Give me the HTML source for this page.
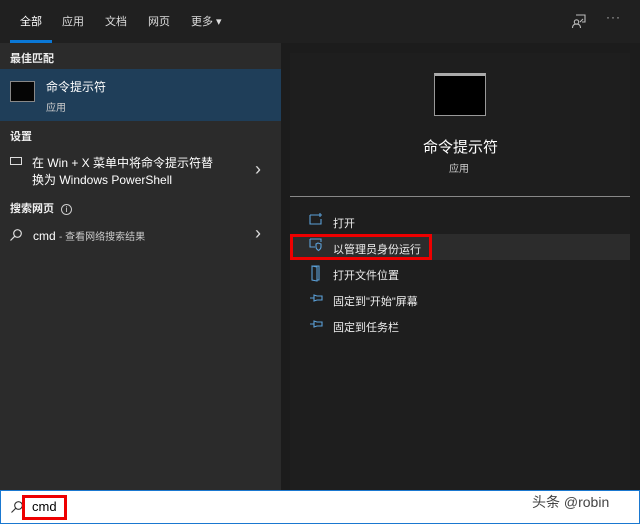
<!DOCTYPE html><html><head><meta charset="utf-8"><style>
*{margin:0;padding:0;box-sizing:border-box}
body{width:640px;height:524px;background:#1c1c1c;font-family:"Liberation Sans","Noto Sans CJK SC",sans-serif;color:#fff;position:relative;overflow:hidden}
.a{position:absolute}
.top{left:0;top:0;width:640px;height:43px;background:#202020}
.tab{top:13px;font-size:11px;color:#ddd}
.left{left:0;top:43px;width:281px;height:447px;background:#2b2b2b}
.card{left:290px;top:53px;width:340px;height:437px;background:#1e1e1e}
.h{font-size:11px;font-weight:bold;color:#eee}
.t{font-size:12px;color:#fff}
.s{font-size:10px;color:#ccc}
.m{font-size:11px;color:#eee;left:333px}
.chev{color:#ddd;font-size:18px;left:255px}
</style></head><body>
<div class="a top"></div>
<div class="a tab" style="left:20px;color:#fff">全部</div>
<div class="a tab" style="left:62px">应用</div>
<div class="a tab" style="left:105px">文档</div>
<div class="a tab" style="left:148px">网页</div>
<div class="a tab" style="left:191px">更多 ▾</div>
<div class="a" style="left:10px;top:40px;width:42px;height:3px;background:#0a78d7"></div>
<svg class="a" style="left:571px;top:13px" width="16" height="16" viewBox="0 0 16 16" fill="none" stroke="#bbb" stroke-width="1.1"><path d="M5 2h9v7h-3M9 9l3-3"/><circle cx="5.5" cy="9" r="2.2"/><path d="M1.5 15c0-3 2-4 4-4s4 1 4 4"/></svg>
<div class="a" style="left:606px;top:10px;color:#bbb;font-size:12px;letter-spacing:1px">···</div>
<div class="a left"></div>
<div class="a h" style="left:10px;top:50px">最佳匹配</div>
<div class="a" style="left:0;top:69px;width:281px;height:52px;background:#1f3e59"></div>
<div class="a" style="left:10px;top:81px;width:25px;height:21px;background:#050505;border:1px solid #888"></div>
<div class="a t" style="left:46px;top:78px">命令提示符</div>
<div class="a s" style="left:46px;top:99px">应用</div>
<div class="a h" style="left:10px;top:128px">设置</div>
<div class="a" style="left:10px;top:157px;width:12px;height:8px;border:1px solid #ddd"></div>
<div class="a t" style="left:32px;top:155px;line-height:17px;font-size:12px">在 Win + X 菜单中将命令提示符替<br>换为 Windows PowerShell</div>
<div class="a chev" style="top:159px">›</div>
<div class="a h" style="left:10px;top:200px">搜索网页 <span style="display:inline-block;width:11px;height:11px;border:1px solid #ccc;border-radius:50%;font-size:8px;text-align:center;line-height:9px;font-weight:normal;margin-left:4px">i</span></div>
<svg class="a" style="left:9px;top:228px" width="14" height="14" viewBox="0 0 14 14" fill="none" stroke="#ddd" stroke-width="1.2"><circle cx="8.5" cy="5.5" r="3.8"/><path d="M5.8 8.2L1.5 12.5"/></svg>
<div class="a t" style="left:33px;top:228px">cmd <span style="font-size:10px;color:#ccc">- 查看网络搜索结果</span></div>
<div class="a chev" style="top:223px">›</div>
<div class="a card"></div>
<div class="a" style="left:434px;top:73px;width:52px;height:43px;background:#000;border:1px solid #999;border-top:3px solid #aaa"></div>
<div class="a" style="left:423px;top:136px;font-size:15px;color:#fff">命令提示符</div>
<div class="a s" style="left:449px;top:160px">应用</div>
<div class="a" style="left:290px;top:196px;width:340px;height:1px;background:#888"></div>
<div class="a" style="left:290px;top:234px;width:340px;height:26px;background:#2c2c2c"></div>
<div class="a" style="left:290px;top:234px;width:142px;height:26px;border:3px solid #e00"></div>
<svg class="a" style="left:308px;top:212px" width="16" height="120" viewBox="0 0 16 120" fill="none" stroke="#5ba0d8" stroke-width="1.1"><path d="M2 3v9h11V7M2 3h8M12 1v4M10 3h4"/><path d="M2 27h11v3M2 27v8h5M10 31l3 1v3c0 2-2 3-2.5 3.5C10 38 8 37 8 35v-3z"/><path d="M4 54v14l5 1V55zM4 54h7v14H9"/><path d="M2 86h4M6 83v6l3-1h5v-4H9z"/><path d="M2 112h4M6 109v6l3-1h5v-4H9z"/></svg>
<div class="a m" style="top:215px">打开</div>
<div class="a m" style="top:241px">以管理员身份运行</div>
<div class="a m" style="top:267px">打开文件位置</div>
<div class="a m" style="top:293px">固定到"开始"屏幕</div>
<div class="a m" style="top:319px">固定到任务栏</div>
<div class="a" style="left:0;top:490px;width:640px;height:34px;background:#fff;border:1px solid #1a78d0"></div>
<svg class="a" style="left:10px;top:500px" width="14" height="14" viewBox="0 0 14 14" fill="none" stroke="#333" stroke-width="1.1"><circle cx="8.5" cy="5.5" r="3.8"/><path d="M5.8 8.2L1.5 12.5"/></svg>
<div class="a" style="left:22px;top:495px;width:45px;height:25px;border:3px solid #e00"></div>
<div class="a" style="left:32px;top:499px;font-size:13px;color:#000">cmd</div>
<div class="a" style="left:532px;top:492px;font-size:14px;color:#444">头条 @robin</div>
</body></html>
